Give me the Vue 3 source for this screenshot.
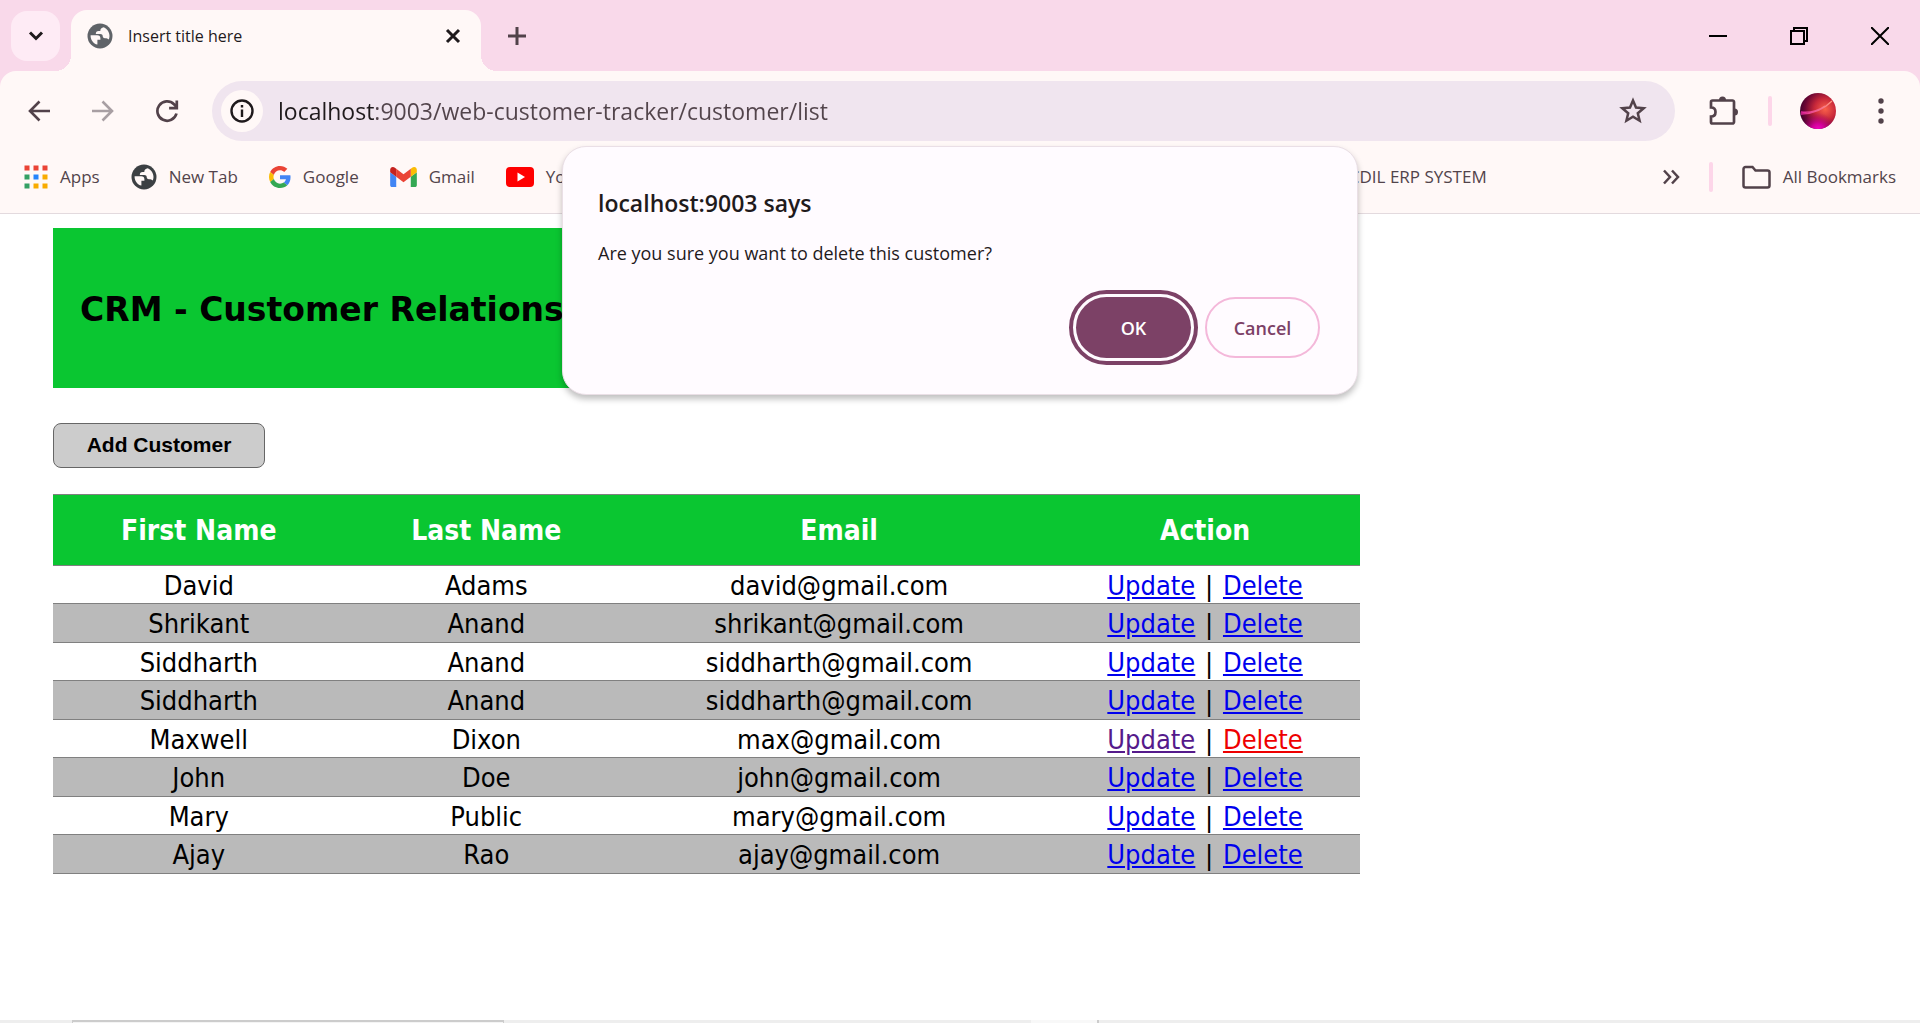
<script setup>
import { ref } from 'vue'

const address = ref('localhost:9003/web-customer-tracker/customer/list')

const appColors = ['#ea4335', '#ea4335', '#ea4335', '#34a064', '#2684fc', '#f9ab00', '#34a064', '#f9ab00', '#f9ab00']

const customers = [
  { first: 'David', last: 'Adams', email: 'david@gmail.com' },
  { first: 'Shrikant', last: 'Anand', email: 'shrikant@gmail.com' },
  { first: 'Siddharth', last: 'Anand', email: 'siddharth@gmail.com' },
  { first: 'Siddharth', last: 'Anand', email: 'siddharth@gmail.com' },
  { first: 'Maxwell', last: 'Dixon', email: 'max@gmail.com', visited: true, pressed: true },
  { first: 'John', last: 'Doe', email: 'john@gmail.com' },
  { first: 'Mary', last: 'Public', email: 'mary@gmail.com' },
  { first: 'Ajay', last: 'Rao', email: 'ajay@gmail.com' }
]
</script>

<template>
  <div class="window">
    <header class="tab-strip">
      <button class="tab-search" aria-label="Search tabs">
        <svg width="16" height="10" viewBox="0 0 16 10"><path d="M2 1.500l6 6 6-6" fill="none" stroke="#1f1a1c" stroke-width="3" /></svg>
      </button>
      <div class="tab">
        <svg width="26" height="26" viewBox="0 0 26 26">
          <circle cx="13" cy="13" r="12.500" fill="#5f6368" />
          <path d="M3.600 12.200h6.600c2.200 0 3.200 1.200 3.200 3v1.600h-3v4.800c-4-1-7-4.600-6.800-9.400z" fill="#fff8f7" />
          <path d="M16.800 4.200c3.400 1.500 5.700 4.800 5.700 8.800 0 1.300-.3 2.500-.7 3.600-.9-1.100-2.300-1.400-3.800-1.400 -1.700 0-2.300-1-2.300-2.200 0-1.400-.9-2.100-2.500-2.100h-4.400c0-2 .8-3 2.900-3h1.600c0-2 1.200-3.200 3.500-3.700z" fill="#fff8f7" />
        </svg>
        <span class="tab-title">Insert title here</span>
        <button class="tab-close" aria-label="Close tab">
          <svg width="16" height="16" viewBox="0 0 16 16"><path d="M2 2l12 12M14 2L2 14" stroke="#1f1a1c" stroke-width="3" /></svg>
        </button>
      </div>
      <button class="new-tab" aria-label="New tab">
        <svg width="18" height="18" viewBox="0 0 18 18"><path d="M9 0v18M0 9h18" stroke="#52424a" stroke-width="3" /></svg>
      </button>
      <div class="window-controls">
        <button aria-label="Minimize"><svg width="18" height="18" viewBox="0 0 18 18"><path d="M0 9h18" stroke="#000" stroke-width="2" /></svg></button>
        <button aria-label="Restore"><svg width="18" height="18" viewBox="0 0 18 18"><path d="M1 4h13v13H1zM4 4V1h13v13h-3" fill="none" stroke="#000" stroke-width="2" /></svg></button>
        <button aria-label="Close"><svg width="18" height="18" viewBox="0 0 18 18"><path d="M0 0l18 18M18 0L0 18" stroke="#000" stroke-width="2" /></svg></button>
      </div>
    </header>

    <section class="chrome">
      <div class="toolbar">
        <nav class="nav-buttons">
          <button aria-label="Back"><svg width="24" height="24" viewBox="0 0 24 24"><path d="M23 12H4M12.500 2.500L3 12l9.500 9.500" fill="none" stroke="#52424a" stroke-width="2.600" /></svg></button>
          <button aria-label="Forward"><svg width="24" height="24" viewBox="0 0 24 24"><path d="M1 12h19M11.500 2.500L21 12l-9.500 9.500" fill="none" stroke="#a89fa3" stroke-width="2.600" /></svg></button>
          <button aria-label="Reload"><svg width="24" height="24" viewBox="0 0 24 24"><path d="M21.500 14.500A9.700 9.700 0 1 1 19 5.200l2 2.100M21.800 1.500v7.700h-7.700" fill="none" stroke="#52424a" stroke-width="2.700" /></svg></button>
        </nav>
        <div class="omnibox">
          <button class="site-info" aria-label="View site information">
            <svg width="24" height="24" viewBox="0 0 24 24"><circle cx="12" cy="12" r="10.500" fill="none" stroke="#1f1a1c" stroke-width="2.400" /><path d="M12 10.500V18M12 6v2.500" stroke="#1f1a1c" stroke-width="2.400" /></svg>
          </button>
          <input v-model="address" class="address" type="text" aria-label="Address and search bar" spellcheck="false" />
          <button class="star" aria-label="Bookmark this page">
            <svg width="28" height="28" viewBox="0 0 28 28"><path d="M14 3.500l3 7.100 7.700.6-5.900 5 1.800 7.500L14 19.700l-6.600 4 1.800-7.500-5.900-5 7.700-.6z" fill="none" stroke="#52424a" stroke-width="2.500" /></svg>
          </button>
        </div>
        <button class="extensions" aria-label="Extensions">
          <svg width="30" height="30" viewBox="0 0 30 30"><path d="M4 4.500h19.500a1.500 1.500 0 0 1 1.500 1.500v20a1.500 1.500 0 0 1-1.500 1.500H3.500A1.500 1.500 0 0 1 2 26v-5.500c3 0 4.500-1.800 4.500-4.500S5 11.500 2 11.500V6a1.500 1.500 0 0 1 1.500-1.500z" fill="none" stroke="#52424a" stroke-width="2.700" /><path d="M10 4a3.500 3.500 0 0 1 7 0zM25.500 12.500a3.500 3.500 0 0 1 0 7z" fill="#52424a" /></svg>
        </button>
        <span class="divider"></span>
        <button class="avatar" aria-label="Profile"><svg width="36" height="36" viewBox="0 0 36 36">
          <defs>
            <radialGradient id="glow" cx=".7" cy=".45" r=".75"><stop offset="0" stop-color="#f9604a" /><stop offset=".4" stop-color="#c8283a" /><stop offset=".75" stop-color="#6c0634" /><stop offset="1" stop-color="#35022c" /></radialGradient>
            <radialGradient id="base" cx=".5" cy="1.050" r=".5"><stop offset="0" stop-color="#ff08d0" /><stop offset=".4" stop-color="#d800a0" stop-opacity=".9" /><stop offset="1" stop-color="#9a0060" stop-opacity="0" /></radialGradient>
            <linearGradient id="streak"><stop offset="0" stop-color="#e0209a" /><stop offset="1" stop-color="#ff9a80" /></linearGradient>
          </defs>
          <circle cx="18" cy="18" r="18" fill="url(#glow)" /><circle cx="18" cy="18" r="18" fill="url(#base)" />
          <path d="M1 21c12 0 22-4 31-13M1 19c9 1 17-1 24-6" fill="none" stroke="url(#streak)" stroke-width="1.300" />
        </svg></button>
        <button class="menu" aria-label="Menu">
          <svg width="6" height="26" viewBox="0 0 6 26"><g fill="#52424a"><circle cx="3" cy="3" r="2.700" /><circle cx="3" cy="13" r="2.700" /><circle cx="3" cy="23" r="2.700" /></g></svg>
        </button>
      </div>

      <nav class="bookmarks">
        <a href="#" class="bookmark">
          <svg width="24" height="24" viewBox="0 0 24 24"><rect v-for="(color, i) in appColors" :key="i" :x="(i % 3) * 9 + 0.500" :y="Math.floor(i / 3) * 9 + 0.500" width="5" height="5" :fill="color" /></svg>
          Apps
        </a>
        <a href="#" class="bookmark">
          <svg width="26" height="26" viewBox="0 0 26 26">
            <circle cx="13" cy="13" r="12.500" fill="#3c4043" />
            <path d="M3.600 12.200h6.600c2.200 0 3.200 1.200 3.200 3v1.600h-3v4.800c-4-1-7-4.600-6.800-9.400z" fill="#fff8f7" />
            <path d="M16.800 4.200c3.400 1.500 5.700 4.800 5.700 8.800 0 1.300-.3 2.500-.7 3.600-.9-1.100-2.300-1.400-3.800-1.400 -1.700 0-2.300-1-2.300-2.200 0-1.400-.9-2.100-2.500-2.100h-4.400c0-2 .8-3 2.900-3h1.600c0-2 1.200-3.200 3.500-3.700z" fill="#fff8f7" />
          </svg>
          New Tab
        </a>
        <a href="#" class="bookmark">
          <svg width="22" height="22" viewBox="0 0 48 48">
            <path fill="#ea4335" d="M24 9.500c3.540 0 6.710 1.220 9.210 3.600l6.850-6.850C35.900 2.380 30.470 0 24 0 14.620 0 6.510 5.380 2.560 13.220l7.980 6.190C12.430 13.720 17.740 9.500 24 9.500z" />
            <path fill="#4285f4" d="M46.980 24.550c0-1.570-.15-3.090-.38-4.550H24v9.020h12.940c-.58 2.960-2.260 5.480-4.780 7.180l7.730 6c4.510-4.180 7.090-10.360 7.090-17.650z" />
            <path fill="#fbbc05" d="M10.530 28.590c-.48-1.450-.76-2.990-.76-4.590s.27-3.140.76-4.590l-7.980-6.190C.92 16.460 0 20.120 0 24c0 3.880.92 7.540 2.560 10.780l7.970-6.190z" />
            <path fill="#34a853" d="M24 48c6.480 0 11.930-2.130 15.890-5.810l-7.730-6c-2.150 1.450-4.920 2.300-8.160 2.300-6.260 0-11.570-4.220-13.470-9.910l-7.980 6.190C6.510 42.620 14.620 48 24 48z" />
          </svg>
          Google
        </a>
        <a href="#" class="bookmark">
          <svg width="27" height="20" viewBox="52 42 88 66">
            <path fill="#4285f4" d="M58 108h14V74L52 59v43c0 3.320 2.690 6 6 6" />
            <path fill="#34a853" d="M120 108h14c3.320 0 6-2.690 6-6V59l-20 15" />
            <path fill="#fbbc04" d="M120 48v26l20-15v-8c0-7.420-8.470-11.650-14.400-7.200" />
            <path fill="#ea4335" d="M72 74V48l24 18 24-18v26L96 92" />
            <path fill="#c5221f" d="M52 51v8l20 15V48l-5.600-4.200c-5.940-4.450-14.400-.22-14.400 7.200" />
          </svg>
          Gmail
        </a>
        <a href="#" class="bookmark">
          <svg width="28" height="20" viewBox="0 0 28 20"><rect width="28" height="20" rx="4" fill="#f00" /><path d="M11.500 5.500v9l7.500-4.500z" fill="#fff" /></svg>
          YouTube
        </a>
        <a href="#" class="bookmark last">CDIL ERP SYSTEM</a>
        <div class="bookmarks-end">
          <button class="overflow" aria-label="More bookmarks">
            <svg width="18" height="16" viewBox="0 0 18 16"><path d="M2 1.500L8 8l-6 6.500M10 1.500L16 8l-6 6.500" fill="none" stroke="#52424a" stroke-width="2.500" /></svg>
          </button>
          <span class="divider"></span>
          <a href="#" class="bookmark">
            <svg width="29" height="24" viewBox="0 0 29 24"><path d="M3.500 2h7l3 3.500H25.500A2 2 0 0 1 27.500 7.500v13a2 2 0 0 1-2 2h-22a2 2 0 0 1-2-2V4a2 2 0 0 1 2-2z" fill="none" stroke="#52424a" stroke-width="2.500" /></svg>
            All Bookmarks
          </a>
        </div>
      </nav>
    </section>

    <main class="page">
      <div class="banner"><h2>CRM - Customer Relationship Manager</h2></div>
      <button class="add">Add Customer</button>
      <table>
        <colgroup><col class="first" /><col class="last-name" /><col class="email" /><col class="action" /></colgroup>
        <thead>
          <tr><th>First Name</th><th>Last Name</th><th>Email</th><th>Action</th></tr>
        </thead>
        <tbody>
          <tr v-for="(c, i) in customers" :key="i">
            <td>{{ c.first }}</td>
            <td>{{ c.last }}</td>
            <td>{{ c.email }}</td>
            <td><a href="#" :class="{ visited: c.visited }">Update</a> <span class="bar">|</span> <a href="#" :class="{ pressed: c.pressed }">Delete</a></td>
          </tr>
        </tbody>
      </table>
    </main>

    <footer class="edge"><span class="edge-box"></span><span class="edge-light"></span></footer>

    <dialog open class="confirm" aria-labelledby="confirm-title">
      <h1 id="confirm-title">localhost:9003 says</h1>
      <p>Are you sure you want to delete this customer?</p>
      <div class="confirm-actions">
        <button class="ok">OK</button>
        <button class="cancel">Cancel</button>
      </div>
    </dialog>
  </div>
</template>

<style>
body {
  margin: 0;
  background: #fff;
}
</style>

<style scoped>
.window {
  position: relative;
  display: flex;
  flex-direction: column;
  min-height: 100vh;
  overflow: hidden;
  font-family: "Open Sans", "Noto Sans", sans-serif;
  color: #1f1a1c;
}

button {
  display: flex;
  align-items: center;
  justify-content: center;
  padding: 0;
  border: 0;
  background: none;
  font-family: inherit;
  color: inherit;
}

svg {
  display: block;
  flex: none;
}

.tab-strip {
  display: flex;
  align-items: center;
  height: 71px;
  padding-left: 11px;
  background: #f9d9ea;
}

.tab-search {
  width: 49px;
  height: 50px;
  border-radius: 16px;
  background: #feebf5;
}

.tab {
  position: relative;
  display: flex;
  align-items: center;
  align-self: flex-end;
  box-sizing: border-box;
  width: 410px;
  height: 61px;
  margin-left: 11px;
  padding: 0 20px 10px 16px;
  border-radius: 16px 16px 0 0;
  background: #fff8f7;
}

.tab::before,
.tab::after {
  content: "";
  position: absolute;
  bottom: 0;
  width: 16px;
  height: 16px;
}

.tab::before {
  right: 100%;
  background: radial-gradient(circle at 0 0, transparent 16px, #fff8f7 16px);
}

.tab::after {
  left: 100%;
  background: radial-gradient(circle at 100% 0, transparent 16px, #fff8f7 16px);
}

.tab-title {
  flex: 1;
  margin-left: 15px;
  font-size: 16px;
}

.new-tab {
  width: 40px;
  height: 40px;
  margin-left: 16px;
}

.window-controls {
  display: flex;
  align-self: stretch;
  margin-left: auto;
}

.window-controls button {
  width: 81px;
}

.chrome {
  border-bottom: 1px solid #e3dade;
  background: linear-gradient(#f9d9ea 16px, #fff8f7 16px);
}

.toolbar {
  display: flex;
  align-items: center;
  height: 80px;
  padding-right: 36px;
  border-radius: 16px 16px 0 0;
  background: #fff8f7;
}

.nav-buttons {
  display: flex;
  gap: 40px;
  padding: 0 33px 0 27px;
}

.omnibox {
  display: flex;
  flex: 1;
  align-items: center;
  height: 60px;
  padding: 0 28px 0 9px;
  border-radius: 30px;
  background: #f0e5ef;
}

.site-info {
  width: 42px;
  height: 42px;
  border-radius: 50%;
  background: #fff8f7;
}

.address {
  flex: 1;
  min-width: 0;
  margin-left: 15px;
  padding: 0;
  border: 0;
  outline: 0;
  background: linear-gradient(to right, #1f1a1c 97px, #52444b 97px);
  background-clip: text;
  font: 23px/32px "Open Sans", "Noto Sans", sans-serif;
  -webkit-text-fill-color: transparent;
}

.extensions {
  margin-left: 34px;
}

.divider {
  width: 4px;
  height: 30px;
  border-radius: 2px;
  background: #fdd6e9;
}

.toolbar .divider {
  margin-left: 29px;
}

.avatar {
  margin-left: 28px;
}

.menu {
  margin-left: 42px;
}

.bookmarks {
  display: flex;
  align-items: center;
  gap: 31px;
  padding: 11px 24px;
}

.bookmarks-end {
  display: flex;
  align-items: center;
  gap: 29px;
  margin-left: 144px;
}

.bookmark {
  display: flex;
  align-items: center;
  gap: 12px;
  font-size: 17px;
  line-height: 30px;
  white-space: nowrap;
  color: #52444b;
  text-decoration: none;
}

.bookmark.last {
  margin-left: auto;
}

.chrome {
  padding-bottom: 10px;
}

.page {
  flex: 1;
  padding: 14px 0 60px 53px;
}

.banner {
  display: flex;
  align-items: center;
  box-sizing: border-box;
  width: 69%;
  height: 160px;
  padding: 4px 0 0 27px;
  background: #0ac631;
  color: #000;
}

h2 {
  margin: 0;
  overflow: hidden;
  font: bold 33px/40px "DejaVu Sans", sans-serif;
  white-space: nowrap;
}

.add {
  box-sizing: border-box;
  width: 212px;
  height: 45px;
  margin: 35px 0 26px;
  padding-bottom: 2px;
  border: 1px solid #666;
  border-radius: 8px;
  background: #ccc;
  font: bold 21px/24px "Liberation Sans", sans-serif;
  color: #000;
}

table {
  width: 70%;
  table-layout: fixed;
  border-collapse: collapse;
  font: 27px/32px "DejaVu Sans Condensed", "DejaVu Sans", sans-serif;
  color: #000;
}

.first { width: 22%; }
.last-name { width: 22%; }
.email { width: 32%; }
.action { width: 24%; }

tr {
  height: 38px;
  border-top: 1px solid #808080;
  border-bottom: 1px solid #808080;
}

tbody tr:nth-child(even) {
  height: 39px;
  background: #bababa;
}

thead tr {
  height: 71px;
  background: #0ac631;
  color: #fff;
  font-size: 28px;
}

th,
td {
  padding: 2px 0 0 4px;
  text-align: center;
}

.bar {
  margin: 0 2px;
}

td a {
  color: #0000ee;
}

td a.visited {
  color: #551a8b;
}

td a.pressed {
  color: #ee0000;
}

.edge {
  display: flex;
  height: 3px;
  background: #eee;
}

.edge-box {
  width: 430px;
  margin-left: 72px;
  border: solid #ccc;
  border-width: 2px 1px 0;
  background: #f4f4f4;
}

.edge-light {
  width: 66px;
  margin-left: 527px;
  border-right: 2px solid #ccc;
  background: #f8f8f8;
}

.confirm {
  top: 146px;
  box-sizing: border-box;
  width: 796px;
  padding: 38px 37px 36px 35px;
  border: 1px solid #eadfe6;
  border-radius: 24px;
  background: #fffbff;
  box-shadow: 0 4px 6px rgba(0, 0, 0, 0.25);
  color: #1f1a1c;
}

.confirm h1 {
  margin: 0;
  font-size: 23px;
  font-weight: 600;
  line-height: 36px;
}

.confirm p {
  margin: 18px 0 30px;
  font-size: 18px;
  line-height: 28px;
}

.confirm-actions {
  display: flex;
  justify-content: flex-end;
  gap: 14px;
}

.confirm-actions button {
  box-sizing: border-box;
  width: 115px;
  height: 61px;
  border-radius: 31px;
  font-size: 18px;
  font-weight: 600;
}

.confirm-actions .ok {
  outline: 4px solid #7c4166;
  outline-offset: 3px;
  background: #7c4166;
  color: #fff;
}

.confirm-actions .cancel {
  border: 2px solid #f4b8da;
  color: #7c4166;
}
</style>
